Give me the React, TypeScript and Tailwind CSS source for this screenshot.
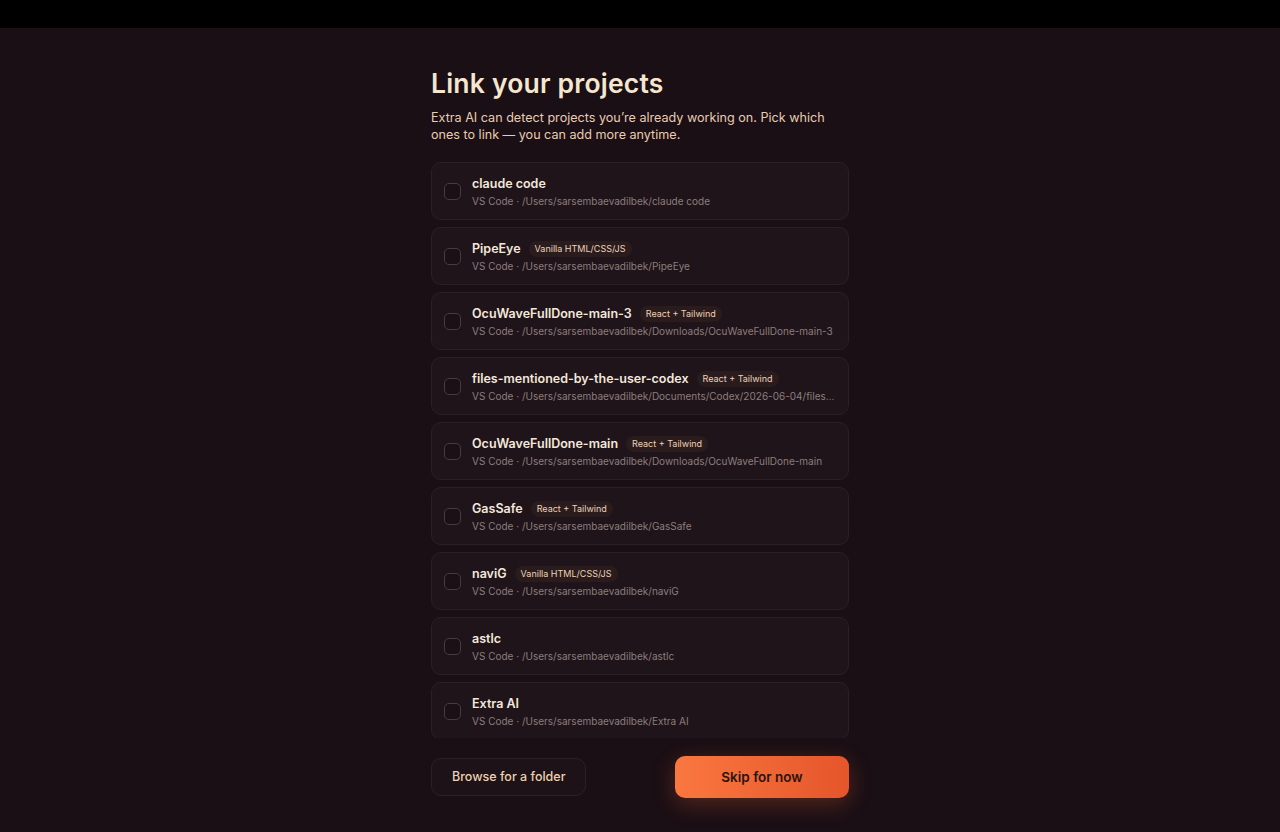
type Project = {
  name: string;
  path: string;
  stack?: string;
};

const projects: Project[] = [
  { name: "claude code", path: "/Users/sarsembaevadilbek/claude code" },
  { name: "PipeEye", path: "/Users/sarsembaevadilbek/PipeEye", stack: "Vanilla HTML/CSS/JS" },
  {
    name: "OcuWaveFullDone-main-3",
    path: "/Users/sarsembaevadilbek/Downloads/OcuWaveFullDone-main-3",
    stack: "React + Tailwind",
  },
  {
    name: "files-mentioned-by-the-user-codex",
    path: "/Users/sarsembaevadilbek/Documents/Codex/2026-06-04/files-mentioned-by-the-user-codex",
    stack: "React + Tailwind",
  },
  {
    name: "OcuWaveFullDone-main",
    path: "/Users/sarsembaevadilbek/Downloads/OcuWaveFullDone-main",
    stack: "React + Tailwind",
  },
  { name: "GasSafe", path: "/Users/sarsembaevadilbek/GasSafe", stack: "React + Tailwind" },
  { name: "naviG", path: "/Users/sarsembaevadilbek/naviG", stack: "Vanilla HTML/CSS/JS" },
  { name: "astlc", path: "/Users/sarsembaevadilbek/astlc" },
  { name: "Extra AI", path: "/Users/sarsembaevadilbek/Extra AI" },
];

function ProjectRow({ project }: { project: Project }) {
  return (
    <label className="flex items-center gap-[11px] h-[58px] shrink-0 px-[12px] rounded-[10px] border border-[#2b2025] bg-[#1f1419] cursor-pointer">
      <span className="w-[17px] h-[17px] shrink-0 rounded-[5px] border border-[#4a3a40] bg-[#1a1015]" />
      <div className="min-w-0 flex-1 flex flex-col gap-[3px] pt-[1px]">
        <div className="flex items-center gap-2">
          <span className="text-[12.5px] leading-[16px] font-semibold text-[#f4e7dc] whitespace-nowrap">
            {project.name}
          </span>
          {project.stack && (
            <span className="px-[6px] py-[2px] rounded-full bg-[#2a1c1d] text-[9px] leading-[12px] text-[#ecd2b8] whitespace-nowrap">
              {project.stack}
            </span>
          )}
        </div>
        <p className="text-[10px] leading-[13px] text-[#8d7d7d] truncate">
          VS Code · {project.path}
        </p>
      </div>
    </label>
  );
}

export default function App() {
  return (
    <div className="h-[832px] flex flex-col bg-[#1a0f15] overflow-hidden" style={{ fontFamily: "Inter, 'Noto Sans', sans-serif" }}>
      <div className="h-[28px] shrink-0 bg-black" />
      <main className="flex-1 flex justify-center">
        <div className="w-[418px] flex flex-col pt-[38px]">
          <h1 className="text-[26.5px] leading-[34px] font-semibold tracking-[0.2px] text-[#f6e6cf]">
            Link your projects
          </h1>
          <p className="mt-[9px] text-[12.6px] leading-[17px] text-[#e8ccb0]">
            Extra AI can detect projects you’re already working on. Pick which ones to link — you can add more anytime.
          </p>
          <div className="mt-[19px] h-[576px] overflow-hidden flex flex-col gap-[7px]">
            {projects.map((p) => (
              <ProjectRow key={p.name} project={p} />
            ))}
          </div>
          <div className="mt-[18px] flex items-center justify-between">
            <button className="h-[38px] px-[20px] rounded-[10px] border border-[#2b2025] bg-[#1c1217] text-[12.5px] font-medium text-[#ecd0b0]">
              Browse for a folder
            </button>
            <button className="h-[42px] w-[174px] rounded-[10px] bg-gradient-to-r from-[#fa7740] to-[#e5552b] text-[13.5px] font-semibold text-[#2a140e] shadow-[0_6px_22px_rgba(240,100,50,0.28)]">
              Skip for now
            </button>
          </div>
        </div>
      </main>
    </div>
  );
}
